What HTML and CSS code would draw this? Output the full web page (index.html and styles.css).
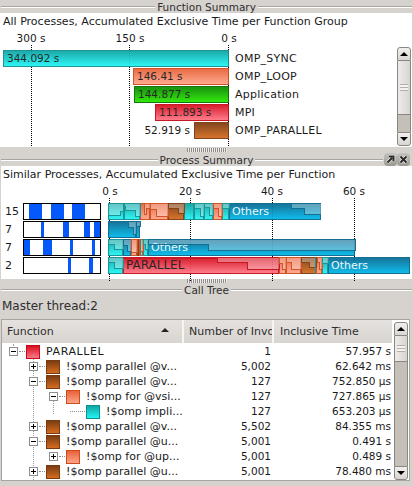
FILE: index.html
```html
<!DOCTYPE html>
<html lang="en">
<head>
    <meta charset="UTF-8">
    <title>Function Summary</title>
    <link rel="stylesheet" href="styles.css">
</head>
<body>
    <div class="dock-title">
        <span class="groove"></span><span class="dock-label">Function Summary</span><span class="groove"></span>
    </div>
    <section class="panel fn-panel">
        <p class="chart-title">All Processes, Accumulated Exclusive Time per Function Group</p>
        <div class="axis fn-axis">
            <span class="tick tick-300">300 s</span>
            <span class="tick tick-150">150 s</span>
            <span class="tick tick-0">0 s</span>
        </div>
        <div class="fn-chart">
            <i class="grid-line grid-300"></i>
            <i class="grid-line grid-150"></i>
            <i class="grid-line grid-0"></i>
            <div class="fn-row">
                <div class="fn-track"><div class="bar cyan" style="width:226px">344.092 s</div></div>
                <span class="fn-name">OMP_SYNC</span>
            </div>
            <div class="fn-row">
                <div class="fn-track"><div class="bar salmon" style="width:96px">146.41 s</div></div>
                <span class="fn-name">OMP_LOOP</span>
            </div>
            <div class="fn-row">
                <div class="fn-track"><div class="bar green" style="width:95px">144.877 s</div></div>
                <span class="fn-name">Application</span>
            </div>
            <div class="fn-row">
                <div class="fn-track"><div class="bar red" style="width:74px">111.893 s</div></div>
                <span class="fn-name">MPI</span>
            </div>
            <div class="fn-row">
                <div class="fn-track"><span class="bar-outside">52.919 s</span><div class="bar brown" style="width:35px"></div></div>
                <span class="fn-name">OMP_PARALLEL</span>
            </div>
        </div>
        <div class="scrollbar fn-scroll">
            <div class="sb-btn"><i class="arrow-up"></i></div>
            <div class="sb-thumb fn-thumb"><i class="grip"></i></div>
            <div class="sb-trough"></div>
            <div class="sb-btn sb-down"><i class="arrow-down"></i></div>
        </div>
    </section>

    <div class="splitter"><i class="splitter-grip"></i></div>

    <div class="dock-title with-buttons">
        <span class="groove"></span><span class="dock-label">Process Summary</span><span class="groove"></span>
        <div class="dock-buttons">
            <span class="dock-btn">
                <svg width="13" height="13" viewBox="0 0 13 13"><path d="M3.500 9.500 8 5M5 3.500H9.500V8" class="dock-halo"/><path d="M3.500 9.500 8 5M5 3.500H9.500V8" class="dock-icon"/></svg>
            </span>
            <span class="dock-btn">
                <svg width="13" height="13" viewBox="0 0 13 13"><path d="M3.500 3.500 9.500 9.500M9.500 3.500 3.500 9.500" class="dock-halo"/><path d="M3.500 3.500 9.500 9.500M9.500 3.500 3.500 9.500" class="dock-icon"/></svg>
            </span>
        </div>
    </div>
    <section class="panel proc-panel">
        <p class="chart-title">Similar Processes, Accumulated Exclusive Time per Function</p>
        <div class="axis proc-axis">
            <span class="tick tick-p0">0 s</span>
            <span class="tick tick-p20">20 s</span>
            <span class="tick tick-p40">40 s</span>
            <span class="tick tick-p60">60 s</span>
        </div>
        <div class="proc-chart">
            <i class="grid-line grid-p0"></i>
            <i class="grid-line grid-p20"></i>
            <i class="grid-line grid-p40"></i>
            <i class="grid-line grid-p60"></i>

            <div class="proc-row">
                <span class="proc-count">15</span>
                <svg class="thumb" width="78" height="17">
                    <rect x="5" width="13" height="15"/><rect x="27" width="13" height="15"/><rect x="48" width="13" height="15"/>
                </svg>
                <div class="stack">
                    <div class="seg cyan" style="width:16px"></div>
                    <div class="seg cyan" style="width:16px"></div>
                    <div class="seg salmon" style="width:10px"></div>
                    <div class="seg salmon" style="width:18px"></div>
                    <div class="seg brown" style="width:16px"></div>
                    <div class="seg cyan" style="width:10px"></div>
                    <div class="seg cyan" style="width:10px"></div>
                    <div class="seg cyan" style="width:9px"></div>
                    <div class="seg salmon" style="width:9px"></div>
                    <div class="seg cyan" style="width:7px"></div>
                    <div class="seg blue seg-text" style="width:92px">Others</div>
                    <svg class="stairs" width="213" height="17">
                        <path class="st-cyan" d="M15 0V8H12V12H0V0Z"/>
                        <path class="st-cyan" d="M16 0H32V13H27V7H17V3H16Z"/>
                        <path class="st-salmon" d="M36 0H42V5H38V11H36Z"/>
                        <path class="st-salmon" d="M42 0H60V13H48V6H42Z"/>
                        <path class="st-brown" d="M60 0H76V10H70V5H60Z"/>
                        <path class="st-cyan" d="M86 0H96V13H92V5H86Z"/>
                        <path class="st-cyan" d="M96 0H105V12H101V4H96Z"/>
                        <path class="st-salmon" d="M105 0H114V13H110V5H105Z"/>
                        <path class="st-cyan" d="M114 0H121V5H114Z"/>
                        <path class="st-blue" d="M183 0H213V11H196V5H183Z"/>
                    </svg>
                </div>
            </div>

            <div class="proc-row">
                <span class="proc-count">7</span>
                <svg class="thumb" width="78" height="17">
                    <rect x="17" width="3" height="15"/><rect x="39" width="6" height="15"/><rect x="60" width="6" height="15"/><rect x="70" width="6" height="15"/>
                </svg>
                <div class="stack">
                    <div class="seg blue" style="width:28px"></div>
                    <div class="seg blue" style="width:4px"></div>
                    <svg class="stairs" width="33" height="17">
                        <path class="st-blue" d="M20 0H28V13H25V6H20Z"/>
                        <path class="st-blue" d="M28 0H32V5H28Z"/>
                    </svg>
                </div>
            </div>

            <div class="proc-row">
                <span class="proc-count">7</span>
                <svg class="thumb" width="78" height="17">
                    <rect width="6" height="15"/><rect x="19" width="9" height="15"/><rect x="46" width="3" height="15"/><rect x="68" width="3" height="15"/>
                </svg>
                <div class="stack">
                    <div class="seg cyan" style="width:15px"></div>
                    <div class="seg blue" style="width:8px"></div>
                    <div class="seg salmon" style="width:6px"></div>
                    <div class="seg brown" style="width:2px"></div>
                    <div class="seg salmon" style="width:4px"></div>
                    <div class="seg cyan" style="width:5px"></div>
                    <div class="seg blue seg-text" style="width:207px">Others</div>
                    <svg class="stairs" width="248" height="17">
                        <path class="st-cyan" d="M0 0H15V10H6V5H0Z"/>
                        <path class="st-blue" d="M15 0H23V12H19V6H15Z"/>
                        <path class="st-salmon" d="M23 0H29V13H23Z"/>
                        <path class="st-salmon" d="M31 0H35V12H31Z"/>
                        <path class="st-cyan" d="M35 0H40V10H37V5H35Z"/>
                        <path class="st-blue" d="M40 0H247V11H100V5H40Z"/>
                        <path class="st-teal" d="M32.500 0V17"/>
                    </svg>
                </div>
            </div>

            <div class="proc-row">
                <span class="proc-count">2</span>
                <svg class="thumb" width="78" height="17">
                    <rect x="44" width="3" height="15"/><rect x="65" width="4" height="15"/>
                </svg>
                <div class="stack">
                    <div class="seg cyan" style="width:15px"></div>
                    <div class="seg red seg-dark" style="width:156px">PARALLEL</div>
                    <div class="seg salmon" style="width:7px"></div>
                    <div class="seg salmon" style="width:15px"></div>
                    <div class="seg brown" style="width:15px"></div>
                    <div class="seg salmon" style="width:6px"></div>
                    <div class="seg cyan" style="width:6px"></div>
                    <div class="seg blue seg-text" style="width:82px">Others</div>
                    <svg class="stairs" width="302" height="17">
                        <path class="st-cyan" d="M0 0H15V11H6V5H0Z"/>
                        <path class="st-red" d="M15 0H171V12H139V5H109V1H15Z"/>
                        <path class="st-salmon" d="M171 0H178V12H174V6H171Z"/>
                        <path class="st-salmon" d="M178 0H193V12H183V5H178Z"/>
                        <path class="st-brown" d="M193 0H208V10H201V5H193Z"/>
                        <path class="st-salmon" d="M209 0H214V12H211V5H209Z"/>
                        <path class="st-cyan" d="M214 0H220V6H214Z"/>
                        <path class="st-teal" d="M207.500 0V17"/>
                    </svg>
                </div>
            </div>
        </div>
    </section>

    <div class="splitter tree-splitter"><i class="splitter-grip"></i></div>

    <div class="dock-title">
        <span class="groove"></span><span class="dock-label">Call Tree</span><span class="groove"></span>
    </div>
    <p class="thread-label">Master thread:2</p>

    <div class="tree-frame">
        <div class="tree-main">
            <div class="tree-head">
                <div class="th th-fn">Function<i class="sort-arrow"></i></div>
                <div class="th th-num">Number of Invo</div>
                <div class="th th-time">Inclusive Time</div>
            </div>
            <div class="tree-body">
                <i class="guide guide-a"></i>
                <i class="guide guide-b"></i>
                <i class="guide guide-c"></i>

                <div class="tree-row">
                    <div class="cell-fn lvl-0"><span class="toggle minus"></span><span class="node red"></span><span class="fn-text fn-root">PARALLEL</span></div>
                    <div class="cell-num">1</div><div class="cell-time">57.957 s</div>
                </div>
                <div class="tree-row">
                    <div class="cell-fn lvl-1"><span class="toggle plus"></span><span class="node brown"></span><span class="fn-text">!$omp parallel @v...</span></div>
                    <div class="cell-num">5,002</div><div class="cell-time">62.642 ms</div>
                </div>
                <div class="tree-row">
                    <div class="cell-fn lvl-1"><span class="toggle minus"></span><span class="node brown"></span><span class="fn-text">!$omp parallel @v...</span></div>
                    <div class="cell-num">127</div><div class="cell-time">752.850 µs</div>
                </div>
                <div class="tree-row">
                    <div class="cell-fn lvl-2"><span class="toggle minus"></span><span class="node salmon"></span><span class="fn-text">!$omp for @vsi...</span></div>
                    <div class="cell-num">127</div><div class="cell-time">727.865 µs</div>
                </div>
                <div class="tree-row">
                    <div class="cell-fn lvl-3"><span class="leaf-line"></span><span class="node cyan"></span><span class="fn-text">!$omp impli...</span></div>
                    <div class="cell-num">127</div><div class="cell-time">653.203 µs</div>
                </div>
                <div class="tree-row">
                    <div class="cell-fn lvl-1"><span class="toggle plus"></span><span class="node brown"></span><span class="fn-text">!$omp parallel @v...</span></div>
                    <div class="cell-num">5,502</div><div class="cell-time">84.355 ms</div>
                </div>
                <div class="tree-row">
                    <div class="cell-fn lvl-1"><span class="toggle minus"></span><span class="node brown"></span><span class="fn-text">!$omp parallel @u...</span></div>
                    <div class="cell-num">5,001</div><div class="cell-time">0.491 s</div>
                </div>
                <div class="tree-row">
                    <div class="cell-fn lvl-2"><span class="toggle plus"></span><span class="node salmon"></span><span class="fn-text">!$omp for @up...</span></div>
                    <div class="cell-num">5,001</div><div class="cell-time">0.489 s</div>
                </div>
                <div class="tree-row">
                    <div class="cell-fn lvl-1"><span class="toggle plus"></span><span class="node brown"></span><span class="fn-text">!$omp parallel @u...</span></div>
                    <div class="cell-num">5,001</div><div class="cell-time">78.480 ms</div>
                </div>
            </div>
        </div>
        <div class="scrollbar tree-scroll">
            <div class="sb-btn"><i class="arrow-up"></i></div>
            <div class="sb-thumb tree-thumb"><i class="grip"></i></div>
            <div class="sb-trough"></div>
            <div class="sb-btn sb-down"><i class="arrow-down"></i></div>
        </div>
    </div>
</body>
</html>
```

FILE: styles.css
```css
html, body {
    height: 100%;
}
body {
    margin: 0;
    width: 413px;
    height: 486px;
    overflow: hidden;
    background-color: #d6d2ce;
    color: #1a1a1a;
    font-family: "DejaVu Sans", sans-serif;
    font-size: 11px;
    line-height: 13px;
}
p {
    margin: 0;
}

/* dock titles */
.dock-title {
    position: relative;
    display: grid;
    grid-template-columns: 1fr auto 1fr;
    align-items: center;
    height: 13px;
    padding: 0 1px;
    color: #2e2e2e;
    font-size: 10.5px;
}
.groove {
    height: 2px;
    background-color: #fff;
    border-top: 1px solid #a8a4a0;
    box-sizing: border-box;
}
.dock-label {
    padding: 1px 2px 0;
    line-height: 12px;
}
.with-buttons .groove:nth-of-type(3) {
    margin-right: 29px;
}
.dock-buttons {
    position: absolute;
    top: 0;
    right: 3px;
    display: flex;
}
.dock-btn {
    width: 13px;
    height: 13px;
    background: linear-gradient(#c4c0bc, #9c9894);
    border-radius: 4px;
}
.dock-halo {
    fill: none;
    stroke: #f0eeec;
    stroke-width: 3.5;
}
.dock-icon {
    fill: none;
    stroke: #2a2a2a;
    stroke-width: 2;
}

/* white chart panels */
.panel {
    position: relative;
    background-color: #fff;
    margin-right: 1px;
}
.fn-panel {
    height: 134px;
}
.proc-panel {
    height: 113px;
    margin-left: 1px;
}
.chart-title {
    padding: 2px 0 0 3px;
    height: 15px;
}
.proc-panel .chart-title {
    padding-left: 2px;
}
.axis {
    position: relative;
    height: 17px;
    font-size: 10.5px;
}
.tick {
    position: absolute;
    top: 2px;
    transform: translateX(-50%);
}
.tick-300 { left: 31px; }
.tick-150 { left: 130px; }
.tick-0 { left: 229px; }
.tick-p0 { left: 109px; }
.tick-p20 { left: 189px; }
.tick-p40 { left: 271px; }
.tick-p60 { left: 353px; }

.grid-line {
    position: absolute;
    top: -2px;
    bottom: 0;
    width: 0;
    border-left: 1px dotted #000;
}
.grid-300 { left: 31px; }
.grid-150 { left: 129px; }
.grid-0 { left: 228px; }
.grid-p0 { left: 108px; }
.grid-p20 { left: 189px; }
.grid-p40 { left: 271px; }
.grid-p60 { left: 353px; }

/* bar colours, shared with the tree icons */
.cyan { background: linear-gradient(#10a5a5, #22f4f4); border: 1px solid #0d8f90; }
.salmon { background: linear-gradient(#e8633a, #ffa489); border: 1px solid #cf4a1a; }
.green { background: linear-gradient(#0c8a00, #26e800); border: 1px solid #0a6e00; }
.red { background: linear-gradient(#d81020, #ff7484); border: 1px solid #c40a18; }
.brown { background: linear-gradient(#7c3c12, #d46c20); border: 1px solid #7a3a10; }
.blue { background: linear-gradient(#0a6c94, #00b8ea); border: 1px solid #08668a; }

/* function summary */
.fn-chart {
    position: relative;
    height: 99px;
    padding-top: 2px;
    box-sizing: border-box;
}
.fn-row {
    display: flex;
    align-items: center;
    height: 18px;
}
.fn-track {
    display: flex;
    justify-content: flex-end;
    align-items: center;
    width: 229px;
    font-size: 10.5px;
}
.bar {
    position: relative;
    box-sizing: border-box;
    height: 17px;
    padding-left: 3px;
    line-height: 15px;
    white-space: nowrap;
    opacity: 0.94;
}
.bar-outside {
    margin-right: 4px;
}
.fn-name {
    margin-left: 6px;
    letter-spacing: 0.25px;
}

/* scrollbars */
.scrollbar {
    display: flex;
    flex-direction: column;
    width: 14px;
    box-sizing: border-box;
}
.fn-scroll {
    position: absolute;
    top: 34px;
    right: 1px;
    height: 99px;
}
.sb-btn {
    display: flex;
    justify-content: center;
    align-items: center;
    flex: none;
    height: 14px;
    background: linear-gradient(#f2f0ee, #d8d5d1);
    border: 1px solid #8a8682;
    border-radius: 3px 3px 0 0;
    box-sizing: border-box;
}
.sb-down {
    border-radius: 0 0 3px 3px;
}
.arrow-up {
    border: 4px solid transparent;
    border-top: 0;
    border-bottom: 4px solid #000;
}
.arrow-down {
    border: 4px solid transparent;
    border-bottom: 0;
    border-top: 4px solid #000;
}
.sb-thumb {
    display: flex;
    justify-content: center;
    align-items: center;
    flex: none;
    background: linear-gradient(90deg, #eeecea, #d8d5d1);
    border-left: 1px solid #8a8682;
    border-right: 1px solid #8a8682;
    border-bottom: 1px solid #8a8682;
    box-sizing: border-box;
}
.fn-thumb { height: 54px; }
.tree-thumb { height: 26px; }
.grip {
    width: 8px;
    height: 7px;
    background: repeating-linear-gradient(#b4b0ac 0, #b4b0ac 1px, #f4f3f1 1px, #f4f3f1 3px);
}
.sb-trough {
    flex: 1;
    background-color: #c4c0b8;
    border-left: 1px solid #8a8682;
    border-right: 1px solid #8a8682;
}

/* splitters */
.splitter {
    display: flex;
    justify-content: center;
    align-items: center;
    height: 6px;
}
.tree-splitter {
    height: 4px;
}
.splitter-grip {
    width: 40px;
    height: 4px;
    background: repeating-linear-gradient(90deg, #8e8a86 0, #8e8a86 1px, #f0eeec 1px, #f0eeec 2px);
}

/* process summary */
.proc-chart {
    position: relative;
    height: 81px;
    padding-top: 2px;
    box-sizing: border-box;
}
.proc-row {
    display: flex;
    align-items: center;
    height: 18px;
}
.proc-count {
    width: 22px;
    padding-left: 4px;
    box-sizing: border-box;
}
.thumb {
    flex: none;
    background-color: #fff;
    border: 1px solid #000;
    box-sizing: border-box;
    shape-rendering: crispEdges;
}
.thumb rect {
    fill: #0558fa;
}
.stack {
    position: relative;
    display: flex;
    height: 17px;
    margin-left: 7px;
    opacity: 0.94;
}
.seg {
    flex: none;
    box-sizing: border-box;
    height: 17px;
    line-height: 15px;
    white-space: nowrap;
}
.seg-text {
    padding-left: 2px;
    color: #e8f8fc;
}
.seg-dark {
    padding-left: 2px;
    font-size: 12px;
}
.stairs {
    position: absolute;
    top: 0;
    left: 0;
    pointer-events: none;
    shape-rendering: crispEdges;
}
.stairs path {
    fill: rgba(255, 255, 255, 0.32);
}
.st-cyan { stroke: #0d8f90; }
.st-salmon { stroke: #cf4a1a; }
.st-brown { stroke: #7a3a10; }
.st-blue { stroke: #08668a; }
.st-red { stroke: #c40a18; }
.st-teal { stroke: #0d8f90; stroke-width: 1; }

/* call tree */
.thread-label {
    height: 23px;
    padding: 4px 0 0 2px;
    box-sizing: border-box;
    color: #2e2e2e;
    font-size: 12px;
}
.tree-frame {
    display: flex;
    height: 162px;
    margin: 0 3px 0 1px;
    border: 1px solid #a8a4a0;
    box-sizing: border-box;
    background-color: #fff;
}
.tree-main {
    flex: 1;
    min-width: 0;
    overflow: hidden;
}
.tree-head {
    display: grid;
    grid-template-columns: 182px 90px 120px;
    height: 24px;
    background: linear-gradient(#e4e1de, #d8d5d1);
    border-bottom: 1px solid #fff;
    box-sizing: border-box;
    color: #2e2e2e;
    font-size: 11px;
    line-height: 23px;
}
.th {
    position: relative;
    padding-left: 5px;
    border-right: 2px solid #f6f5f4;
    white-space: nowrap;
    overflow: hidden;
}
.th-time {
    padding-left: 6px;
}
.sort-arrow {
    position: absolute;
    top: 8px;
    right: 13px;
    border: 4px solid transparent;
    border-top: 0;
    border-bottom: 4px solid #222;
}
.tree-body {
    position: relative;
}
.tree-row {
    display: grid;
    grid-template-columns: 182px 87px 120px;
    align-items: center;
    height: 15px;
    font-size: 10.5px;
    color: #1a1a1a;
}
.fn-text {
    font-size: 11px;
}
.fn-root {
    letter-spacing: 0.6px;
}
.cell-fn {
    display: flex;
    align-items: center;
    white-space: nowrap;
}
.lvl-0 { padding-left: 7px; }
.lvl-1 { padding-left: 27px; }
.lvl-2 { padding-left: 47px; }
.lvl-3 { padding-left: 67px; }
.cell-num, .cell-time {
    text-align: right;
}
.toggle, .leaf-line {
    position: relative;
    flex: none;
    width: 9px;
    height: 9px;
    margin-right: 8px;
    box-sizing: border-box;
}
.toggle {
    border: 1px solid #8e8e8e;
    background: linear-gradient(#000, #000) center / 5px 1px no-repeat, #fff;
}
.plus {
    background: linear-gradient(#000, #000) center / 5px 1px no-repeat,
                linear-gradient(#000, #000) center / 1px 5px no-repeat, #fff;
}
.toggle::after {
    content: "";
    position: absolute;
    top: 3px;
    left: 9px;
    width: 6px;
    border-top: 1px dotted #8e8e8e;
}
.leaf-line::after {
    content: "";
    position: absolute;
    top: 4px;
    left: 1px;
    width: 15px;
    border-top: 1px dotted #8e8e8e;
}
.node {
    flex: none;
    width: 14px;
    height: 14px;
    box-sizing: border-box;
    margin-right: 6px;
}
.guide {
    position: absolute;
    width: 0;
    border-left: 1px dotted #9a9a9a;
}
.guide-a { left: 11px; top: 0; height: 4px; }
.guide-b { left: 31px; top: 10px; height: 130px; }
.guide-c { left: 51px; top: 55px; height: 15px; }

.tree-scroll {
    flex: none;
    width: 14px;
    margin: 2px 1px 0 2px;
}
```
